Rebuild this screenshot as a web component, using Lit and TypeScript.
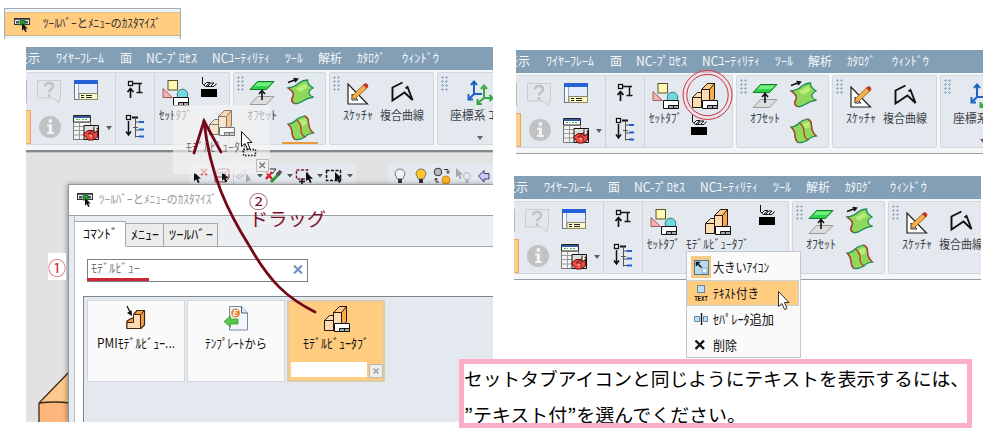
import { LitElement, html, svg, css, nothing } from "lit";
import { customElement, property } from "lit/decorators.js";

/* Text set to an exact width, as the narrow UI face of the application is. */
@customElement("fit-text")
class FitText extends LitElement {
  @property() text = "";
  @property({ type: Number }) w = 50;
  @property({ type: Number }) size = 12;
  static styles = css`
    :host { display: block; flex: none; line-height: 0; }
    svg { display: block; overflow: visible; }
    text { font-family: "Noto Sans CJK JP", "Noto Sans", sans-serif; fill: currentColor; }
  `;
  render() {
    const h = Math.round(this.size * 1.34);
    return html`<svg width=${this.w} height=${h}>
      <text x="0" y=${this.size * 1.04} font-size=${this.size} textLength=${this.w} lengthAdjust="spacingAndGlyphs">${this.text}</text>
    </svg>`;
  }
}

const cursor = (x: number, y: number, s = 1) => svg`
  <path transform="translate(${x} ${y}) scale(${s})" d="M0 0V11L2.6 8.6L4.6 13L6.6 12L4.7 7.9H8.2Z" fill="#111"/>`;

const viewTab = svg`
  <path d="M1 14.5L6.500 9.500H11V24H1Z" fill="#fde3c4"/>
  <path d="M1.500 14.500H11V24.500H1.500ZM1.500 14.500L6.500 9.500H11V14.500" fill="#fddcb4" stroke="#2a1708"/>
  <path d="M10.500 6.500L16.500 .5H23.500V16L18 20Z" fill="#f9ad4a" stroke="#2a1708"/>
  <path d="M10.500 6.500L16.500 .5H23.500L18.500 6.500Z" fill="#fbc887" stroke="#2a1708"/>
  <path d="M10.500 6.500H18.500V24H10.500Z" fill="#fddcb4" stroke="#2a1708"/>
  <path d="M11.500 17.500H26.500V25.500H11.500Z" fill="#fff" stroke="#111"/>
  <path d="M16.500 22.500H26.500V25.500H16.500Z" fill="#aaa" stroke="#111"/><path d="M21.500 22V25" stroke="#111"/>`;

const icons: Record<string, unknown> = {
  help: svg`<path d="M1.5 1.500H24.500V19H23.500L23 24L17.500 19H1.500Z" fill="#e4e7ea" stroke="#c9cdd1"/>
    <path d="M9 7.500Q9.200 4 13 4Q17 4 17 7.200Q17 9.300 14.800 10.500Q13 11.500 13 13.500" fill="none" stroke="#bfc2c5" stroke-width="2.300"/>
    <circle cx="13" cy="16.600" r="1.500" fill="#bfc2c5"/>`,
  info: svg`<circle cx="14" cy="12" r="11" fill="#c0c2c4"/><circle cx="14.300" cy="6" r="2" fill="#f2f2f2"/>
    <path d="M11 9.500H16V17H18V19H11V17H12.800V11.500H11Z" fill="#f2f2f2"/>`,
  window: svg`<rect x="1.500" y="1.500" width="23" height="19" fill="#f5f8ff" stroke="#6c7484"/>
    <rect x="1" y="1" width="24" height="4" fill="#2562d8"/><path d="M5.500 5V20.500" stroke="#a0a8b8"/>
    <path d="M6 5H24V15H6Z" fill="#e4ecfc"/><rect x="6" y="14.500" width="18.500" height="6" fill="#fdf9c4" stroke="#8b8b6a"/>
    <path d="M8 16.500H11M8 18.500H11M13 16.500H19M13 18.500H19" stroke="#222"/>`,
  table: svg`<path d="M.5 .5H17.500V7H.5Z" fill="#fff" stroke="#222"/><path d="M.5 2H17.500" stroke="#345b9c" stroke-width="2"/>
    <path d="M3 4.500H7M9 4.500H14" stroke="#40b050" stroke-dasharray="2 1"/>
    <path d="M.5 7.500H17.500V24.500H.5Z" fill="#f4f4f0" stroke="#777"/><path d="M.5 11.500H17M.5 15.500H17M.5 20H17M6.500 7.500V24" stroke="#999"/>
    <path d="M11 10.500H25.500V24.500H11Z" fill="#ddd" stroke="#111"/>
    <path d="M10.500 19L15 15.500H20L24.500 13V22L20 25H15Z" fill="#ee4a42" stroke="#6b0c0c"/><path d="M15 19H20V25M15 19L20 15.500" stroke="#7c1010" fill="#ff928a"/>
    <path d="M21 11.500V18L25 15" fill="#fff" stroke="#111"/>`,
  insert: svg`<rect x="5.500" y="2.500" width="4" height="4" fill="#fff" stroke="#111" stroke-width="1.300"/>
    <path d="M10 4.500H13M13 4.500H19M16.500 5V13.500M13.500 13.500H19.500" stroke="#111" stroke-width="1.400"/><path d="M7.500 10V19M4.500 13L7.500 9.500L10.500 13" fill="none" stroke="#111" stroke-width="1.700"/>`,
  tree: svg`<rect x="3.500" y=".5" width="4" height="4" fill="#fff" stroke="#111" stroke-width="1.300"/>
    <path d="M5.500 6V19M3 16.500L5.500 20L8 16.500" fill="none" stroke="#111" stroke-width="1.500"/><path d="M9 2.500H15" stroke="#111" stroke-width="2"/>
    <path d="M12.500 2.500V22.500M10 12.500H15M12.500 7H16M12.500 15H16M12.500 21.500H16" stroke="#555" fill="none"/>
    <path d="M16 7H21M16 14.500H21M16 21.500H21" stroke="#1f62d0" stroke-width="2"/>`,
  settab: svg`<rect x="6" y=".5" width="9.500" height="9.500" fill="#fff9b0" stroke="#56532c"/>
    <path d="M1 8.500V17.500H10.500Z" fill="#f7b1b0" stroke="#a05d60"/><circle cx="20.500" cy="14.500" r="5.300" fill="#74d9de" stroke="#28787e"/>
    <path d="M11.500 17.500H26.500V25.500H11.500Z" fill="#fff" stroke="#111"/><path d="M16.500 22.500H26.500V25.500H16.500Z" fill="#aaa" stroke="#111"/><path d="M21.500 22V25" stroke="#111"/>`,
  viewtab: viewTab,
  clapper: svg`<rect x="0" y="12" width="16" height="8" fill="#000"/>
    <path d="M1.500 0V7L4.500 9.500L9 5.500H5.500L3 8M5 9.500H9.500L13 6H9.500L7 9M10 9.500H13L15.500 6.500" fill="none" stroke="#111"/>`,
  offset: svg`<path d="M8.500 1.500H25L17.500 9.500H1Z" fill="#2fd24a" stroke="#167a28"/><path d="M8.500 2.500H23L19 6H6Z" fill="#73ef7e"/>
    <path d="M8.500 16.500H25L17.500 24.500H1Z" fill="#dcdcdc" stroke="#9a9a9a"/><path d="M13 10V20M10 14L13 10.500L16 14" fill="none" stroke="#111" stroke-width="1.600"/>`,
  sheet: svg`<path d="M1 9Q8 8 12 4Q16 1 20.500 1Q20 5 26 9Q21.500 11.500 22 14Q22.500 17 26.500 18Q20 19 15 22.500Q10 25.500 7.500 24.500Q3 22 5.500 18.500Q9 14 1 9Z" fill="#8fd85c" stroke="#1b8b5a" stroke-width="1.300"/>
    <path d="M9 9.500L18 4.500L21 8L13 13Z" fill="#b7ee7b"/><path d="M1 9Q9 14 5.500 18.500Q3 22 7.500 24.500" fill="none" stroke="#c2372a" stroke-width="1.400"/>
    <path d="M1 3.500L9 .5M6.500 -.5L10.500 0L8 3" stroke="#111" stroke-width="1.400" fill="none"/>`,
  strip: svg`<path d="M1 9Q6 8.500 9 5Q12 2 17.500 1Q22 3 21.500 8Q22 15 26.500 18Q21 18.500 18 22Q12 25.500 8 24.500Q5 22 5 17Q4.500 12 1 9Z" fill="#8fd85c" stroke="#1b8b5a" stroke-width="1.200"/>
    <path d="M11 6.500Q15 4 19 4L20 9L15 11Z" fill="#b7ee7b"/>
    <path d="M1 9Q4.500 12 5 17Q5 22 8 24.500M9.500 5Q14 8 14 14Q14 20 18 22M17.500 1Q22 3 21.500 8Q22 15 26.500 18" fill="none" stroke="#b9402a" stroke-width="1.400"/>`,
  sketch: svg`<path d="M1 4V24H20.500Z" fill="#fff" stroke="#222" stroke-width="1.200"/><path d="M5 14V20H11Z" fill="#e5e9ee" stroke="#333"/>
    <path d="M4.500 19.500L6 15L17 4.500L20.500 7.500L9 18Z" fill="#f3b14b" stroke="#8a5a1a" stroke-width=".8"/>
    <path d="M16 5L18.500 3Q21 3.500 21.500 6L19.500 8.500Z" fill="#c3352f"/>`,
  curve: svg`<path d="M11.500 2.500L1.500 7.500V20.500L13.500 12.500L21.500 20L16.500 7L14.500 8.500" fill="none" stroke="#111" stroke-width="1.900"/>`,
  axes: svg`<path d="M7 3V14H15M7 14L2 19" fill="none" stroke="#1f62c4" stroke-width="2"/><path d="M4 5L7 1.500L10 5M1.500 14V19.500H6" fill="none" stroke="#1f62c4" stroke-width="2"/>
    <path d="M17 8V18H25M17 18L11 23" fill="none" stroke="#39a642" stroke-width="2"/><path d="M14 9L17 5.500L20 9M22.500 15L25.500 18L22.500 21M10.500 19V24H15" fill="none" stroke="#39a642" stroke-width="2"/>`,
  custom: svg`<rect x=".5" y=".5" width="15" height="6" fill="#eee" stroke="#333"/><path d="M0 1H16" stroke="#333" stroke-width="1.500"/>
    <rect x="2" y="3" width="3" height="2.500" fill="#555"/><rect x="11" y="3" width="3" height="2.500" fill="#555"/><rect x="6" y="2.500" width="5" height="4.500" fill="#25a035" stroke="#163" stroke-width=".8"/>${cursor(8, 5, 0.7)}`,
  pmi: svg`<path d="M1 15L6 12H8V8L11 4.500H18.500V19L15 22.500H1Z" fill="#f2a24c" stroke="#43230c" stroke-width="1.200"/>
    <path d="M1 16.500H7.500V8.500H14.500V22.500H1Z" fill="#fddcb4" stroke="#43230c"/><path d="M14.500 8.500L18.500 4.500" stroke="#43230c"/>
    <path d="M1 0L5 8" stroke="#111" stroke-width="1.300"/><path d="M1 7L6 10L5.500 4Z" fill="#111"/>`,
  template: svg`<path d="M5.500 .5H17.500L23.500 7V24H5.500Z" fill="#f3f7fc" stroke="#7788a0"/><path d="M17.500 .5V7H23.500" fill="#dce8f8" stroke="#52627c"/>
    <circle cx="11.500" cy="7" r="4.500" fill="#ea843d"/><path d="M14 4.500H10.500L9.500 9.500H13M10 7H13" fill="none" stroke="#fff" stroke-width="1.200"/>
    <path d="M0 15.500L6.500 10V13H14V18H6.500V21Z" fill="#5bc748" stroke="#3b9932" stroke-width=".8"/>`,
};

const tIcon = (n: string, w = 27, h = 26) => html`<svg class="i" width=${w} height=${h} viewBox="0 0 ${w} ${h}" fill="none">${icons[n]}</svg>`;

const MENUS: [string, number, number][] = [
  ["表示", 24, -10], ["ﾜｲﾔｰﾌﾚｰﾑ", 48, 16], ["面", 12, 16], ["NC-ﾌﾟﾛｾｽ", 51, 14], ["NCﾕｰﾃｨﾘﾃｨ", 58, 15],
  ["ﾂｰﾙ", 18, 15], ["解析", 24, 15], ["ｶﾀﾛｸﾞ", 28, 15], ["ｳｨﾝﾄﾞｳ", 37, 17],
];

@customElement("cad-ribbon")
class CadRibbon extends LitElement {
  @property() mode = "drag";
  static styles = css`
    :host { display: block; width: 467px; height: 103px; overflow: hidden; background: #f5f6f8; color: #3c4248; }
    .menu { display: flex; height: 23px; align-items: center; background: #839fb5; color: #f4f8fb; box-sizing: border-box; padding-bottom: 1px; overflow: hidden; }
    .row { display: flex; gap: 3px; padding-top: 2px; }
    .panel { display: flex; flex: none; box-sizing: border-box; height: 73px; border: 1px solid #d3d8dd; background: #e3e9ef; border-radius: 2px; overflow: hidden; }
    .drag .p1 { width: 204px; } .icon .p1 { width: 217px; } .text .p1 { width: 275px; }
    .p1 { border-left: 0; } .p2 { width: 93px; } .p3 { width: 105px; } .p4 { width: 90px; }
    .col { display: grid; grid-template-rows: 36px 30px; padding-top: 6px; flex: none; align-content: start; }
    .i { display: block; flex: none; overflow: visible; }
    .edge { width: 5px; flex: none; display: flex; flex-direction: column; gap: 7px; padding-top: 7px; }
    .bar { width: 1px; height: 23px; background: #b6babe; }
    .sel { width: 5px; height: 34px; box-sizing: border-box; background: #fccf8c; border: 1px solid #e8a564; border-left: 0; }
    .help { width: 42px; padding-left: 5px; box-sizing: border-box; }
    .win { width: 32px; }
    .caret { width: 0; height: 0; border: 3px solid transparent; border-top: 4px solid #5b5f63; border-bottom: 0; flex: none; }
    .win + .caret { margin: 53px 3px 0 1px; }
    .sep { width: 1px; background: #cdd3d9; flex: none; }
    .tree { width: 31px; padding-left: 7px; }
    .big { display: flex; flex-direction: column; align-items: center; padding-top: 7px; gap: 2px; flex: none; }
    .set { width: 40px; }
    .clap { padding-top: 4px; margin-left: 6px; }
    .view { padding: 7px 0 0 6px; }
    .view .i + .i { margin-top: 6px; }
    .text .view2 { width: 64px; margin-left: 2px; } .text .clap { margin-left: 10px; padding-top: 3px; }
    .grip { width: 8px; height: 15px; margin: 3px 0 0 3px; flex: none; background: radial-gradient(circle at 1.500px 1.500px, #9db3c8 1.300px, transparent 1.400px) 0 0 / 4px 4px; }
    .ofs { width: 32px; margin-left: 1px; }
    .sheets { width: 36px; margin-left: 4px; padding-left: 5px; box-sizing: border-box; }
    .drag .sheets { border-bottom: 2px solid #e99a3f; }
    .sk { width: 32px; margin-left: 1px; } .cv { width: 45px; margin-left: 5px; }
    .ax { width: 62px; margin-left: 1px; align-items: flex-start; } .ax .i { margin-left: 17px; } .ax .caret { margin: 10px 0 0 27px; }
  `;
  render() {
    const m = this.mode;
    const clap = tIcon("clapper", 16, 20);
    return html`<div class=${m}>
      <div class="menu">${MENUS.map(([t, w, g]) => html`<fit-text style="margin-left:${g}px" .text=${t} .w=${w} .size=${12.5}></fit-text>`)}</div>
      <div class="row">
        <div class="panel p1">
          <div class="edge"><div class="bar"></div><div class="sel"></div></div>
          <div class="col help">${tIcon("help")}${tIcon("info")}</div>
          <div class="col win">${tIcon("window")}${tIcon("table")}</div><div class="caret"></div>
          <div class="sep"></div>
          <div class="col tree">${tIcon("insert", 24)}${tIcon("tree", 24)}</div>
          <div class="sep"></div>
          <div class="big set">${tIcon("settab")}<fit-text .text=${"ｾｯﾄﾀﾌﾞ"} .w=${33} .size=${12}></fit-text></div>
          ${m === "icon" ? html`<div class="view">${tIcon("viewtab")}${clap}</div>` : nothing}
          ${m === "text" ? html`<div class="big view2">${tIcon("viewtab")}<fit-text .text=${"ﾓﾃﾞﾙﾋﾞｭｰﾀﾌﾞ"} .w=${63} .size=${12}></fit-text></div>` : nothing}
          ${m !== "icon" ? html`<div class="clap">${clap}</div>` : nothing}
        </div>
        <div class="panel p2"><div class="grip"></div>
          <div class="big ofs">${tIcon("offset")}<fit-text .text=${"ｵﾌｾｯﾄ"} .w=${30} .size=${12}></fit-text></div>
          <div class="col sheets">${tIcon("sheet")}${tIcon("strip")}</div>
        </div>
        <div class="panel p3"><div class="grip"></div>
          <div class="big sk">${tIcon("sketch", 22)}<fit-text .text=${"ｽｹｯﾁｬ"} .w=${30} .size=${12}></fit-text></div>
          <div class="big cv">${tIcon("curve", 22)}<fit-text .text=${"複合曲線"} .w=${44} .size=${12}></fit-text></div>
        </div>
        <div class="panel p4"><div class="grip"></div>
          <div class="big ax">${tIcon("axes")}<fit-text .text=${"座標系 ｺﾋﾟｰ"} .w=${62} .size=${12}></fit-text><div class="caret"></div></div>
        </div>
      </div></div>`;
  }
}

const bulb = (x: number, fill: string) => svg`<path d="M${x} 6A5 5 0 1 1 ${x + 10} 6Q${x + 9} 9 ${x + 7.5} 11H${x + 2.5}Q${x + 1} 9 ${x} 6Z" fill=${fill} stroke="#777"/>
  <path d="M${x + 3} 11H${x + 7}V15H${x + 3}Z" fill="#333"/>`;
const caret = (x: number) => svg`<path d="M${x} 6H${x + 6}L${x + 3} 9.500Z" fill="#555"/>`;

@customElement("customize-dialog")
class CustomizeDialog extends LitElement {
  static styles = css`
    :host { display: flex; flex-direction: column; box-sizing: border-box; width: 425px; height: 238px; border-left: 1px solid #8796a2; border-top: 1px solid #969ba0; background: #fff; color: #111; box-shadow: -1px 0 5px #0005; }
    .title { display: flex; align-items: center; gap: 6px; height: 30px; box-sizing: border-box; padding: 0 0 1px 8px; color: #9a9a9a; flex: none; }
    .frame { flex: 1; display: flex; border-top: 1px solid #9ba1a6; background: #e6ebf0; padding-left: 5px; min-height: 0; }
    .page { flex: 1; min-width: 0; display: flex; flex-direction: column; border-left: 1px solid #b3bcc5; background: #fff; }
    .tabs { display: flex; align-items: flex-end; height: 31px; background: #eceff2; flex: none; }
    .tab { display: flex; justify-content: center; align-items: center; box-sizing: border-box; height: 24px; background: #ececec; border: 1px solid #a4a8ac; border-left: 0; padding-bottom: 3px; }
    .on { width: 51px; height: 26px; background: #fff; border-bottom-color: #fff; }
    .t2 { width: 38px; } .t3 { width: 54px; } .rest { flex: 1; border-bottom: 1px solid #a4a8ac; }
    .search { display: flex; justify-content: space-between; align-items: center; box-sizing: border-box; width: 221px; height: 23px; margin: 12px 0 14px 12px; border: 1px solid #7d8186; padding: 0 4px 3px 3px; color: #70757a; flex: none; }
    .list { display: flex; gap: 2px; flex: 1; margin-left: 8px; padding: 3px; border-left: 1px solid #7f868c; border-top: 1px solid #7f868c; background: #e3e9ef; align-items: flex-start; }
    .card { width: 98px; height: 82px; box-sizing: border-box; border: 1px solid #d1d6dc; background: #fafafa; display: flex; flex-direction: column; align-items: center; padding-top: 5px; gap: 2px; flex: none; }
    .pick { background: #ffcc80; border: 2px solid #ddcaa6; padding-top: 4px; }
    .edit { display: flex; gap: 2px; align-items: flex-end; align-self: stretch; margin: 9px 0 0 2px; }
    .field { width: 78px; height: 15px; background: #fff; }
    .x { width: 12px; height: 12px; border: 1px solid #b8b8b8; background: #eee; box-sizing: content-box; margin-bottom: -1px; }
    svg { display: block; flex: none; overflow: visible; }
  `;
  render() {
    return html`
      <div class="title">${tIcon("custom", 16, 13)}<fit-text .text=${"ﾂｰﾙﾊﾞｰとﾒﾆｭｰのｶｽﾀﾏｲｽﾞ"} .w=${118} .size=${12}></fit-text></div>
      <div class="frame"><div class="page">
        <div class="tabs">
          <div class="tab on"><fit-text .text=${"ｺﾏﾝﾄﾞ"} .w=${35} .size=${13}></fit-text></div>
          <div class="tab t2"><fit-text .text=${"ﾒﾆｭｰ"} .w=${28} .size=${13}></fit-text></div>
          <div class="tab t3"><fit-text .text=${"ﾂｰﾙﾊﾞｰ"} .w=${44} .size=${13}></fit-text></div><div class="rest"></div>
        </div>
        <div class="search"><fit-text .text=${"ﾓﾃﾞﾙﾋﾞｭｰ"} .w=${49} .size=${12}></fit-text>
          <svg width="10" height="10"><path d="M1 1.500L9 9.500M9 1.500L1 9.500" stroke="#7193c4" stroke-width="2.200"/></svg></div>
        <div class="list">
          <div class="card">${tIcon("pmi", 20)}<fit-text .text=${"PMIﾓﾃﾞﾙﾋﾞｭｰ..."} .w=${78} .size=${13}></fit-text></div>
          <div class="card">${tIcon("template", 25)}<fit-text .text=${"ﾃﾝﾌﾟﾚｰﾄから"} .w=${62} .size=${13}></fit-text></div>
          <div class="card pick">${tIcon("viewtab")}<fit-text .text=${"ﾓﾃﾞﾙﾋﾞｭｰﾀﾌﾞ"} .w=${66} .size=${13}></fit-text>
            <div class="edit"><div class="field"></div><div class="x"><svg width="12" height="12"><path d="M3.500 3.500L8.500 8.500M8.500 3.500L3.500 8.500" stroke="#999" stroke-width="1.300"/></svg></div></div></div>
        </div>
      </div></div>`;
  }
}

@customElement("app-root")
class AppRoot extends LitElement {
  static styles = css`
    :host { display: block; position: relative; width: 986px; height: 428px; background: #fff; overflow: hidden; font-family: "Noto Sans CJK JP", sans-serif; color: #111; }
    .abs, .shot { position: absolute; }
    svg { display: block; overflow: visible; flex: none; }
    .entry { left: 4px; top: 8px; width: 177px; height: 31px; box-sizing: border-box; border: 1px solid #a4abba; border-bottom: 0; background: #eff2f5; padding-top: 3px; }
    .entry div { display: flex; align-items: center; gap: 13px; height: 24px; background: #ffcc80; padding-left: 9px; box-sizing: border-box; border-top: 1px solid #dfc39a; border-bottom: 1px solid #c9b28e; color: #333; }
    .a { left: 26px; top: 47px; width: 467px; height: 375px; background: #e2e2e2; overflow: hidden; }
    .line { height: 2px; background: #85888a; border-bottom: 1px solid #c2c2c2; }
    .strips { display: flex; gap: 32px; padding: 10px 0 0 163px; }
    .strip { box-sizing: border-box; height: 24px; background: #e3e9ef; padding: 5px 0 0 4px; flex: none; border-radius: 2px; }
    .s1 { width: 167px; } .s2 { width: 110px; padding-left: 7px; }
    .model { left: 13px; top: 323px; }
    customize-dialog { position: absolute; left: 42px; top: 137px; }
    .b { left: 516px; top: 50px; } .c { left: 514px; top: 176px; }
    .thin { height: 1px; background: #9a9c9e; }
    .ghost { left: 173px; top: 105px; width: 97px; height: 69px; background: #f3f3f3a8; color: #777; display: flex; flex-direction: column; align-items: center; padding-top: 5px; gap: 4px; box-sizing: border-box; }
    .ghost svg { opacity: .55; } .ghost fit-text { margin-right: 5px; }
    .over { left: 0; top: 0; pointer-events: none; }
    .one { left: 48px; top: 253px; width: 18px; height: 27px; background: #fff; color: #d0303a; display: flex; align-items: center; }
    .one fit-text { margin-top: 2px; }
    .two { left: 249px; top: 190px; color: #7d0f2c; }
    .drag { left: 249px; top: 207px; color: #7d0f2c; }
    .under { left: 87px; top: 278px; width: 62px; height: 3px; background: #cf2431; }
    .ctx { left: 686px; top: 251px; width: 115px; height: 107px; box-sizing: border-box; border: 1px solid #c4c8cc; background: #fafafa; padding-top: 2px; }
    .it { display: flex; align-items: center; height: 26px; box-sizing: border-box; padding-left: 3px; gap: 2px; border: 1px solid transparent; }
    .it svg { width: 20px; height: 22px; } .it fit-text { margin-top: -2px; }
    .hot { background: #ffcc80; border-color: #c7cfd8; margin-right: 1px; }
    .note { left: 459px; top: 359px; width: 513px; height: 69px; box-sizing: border-box; border: 5px solid #fbaec8; background: #fff; color: #000; display: flex; flex-direction: column; gap: 11px; padding-top: 3px; overflow: hidden; }
  `;
  render() {
    return html`
      <div class="abs entry"><div>${tIcon("custom", 16, 13)}<fit-text .text=${"ﾂｰﾙﾊﾞｰとﾒﾆｭｰのｶｽﾀﾏｲｽﾞ"} .w=${118} .size=${12}></fit-text></div></div>

      <div class="shot a">
        <cad-ribbon mode="drag"></cad-ribbon><div class="line"></div>
        <div class="strips">
          <div class="strip s1"><svg width="160" height="16" fill="none">
            ${cursor(1, 4, 0.85)}<path d="M8 1L14 7M14 1L8 7" stroke="#dd3a3a" stroke-width="1.800"/>
            <path d="M22 5L26 1H36V10L32 14H22ZM22 5H32V14M32 5L36 1M22 9H36" stroke="#a54545"/>${cursor(29, 4, 0.8)}
            <path d="M40.500 -3V16" stroke="#ccd1d6"/><path d="M43 9L52 1L54 4L46 11Z" fill="#ddd" stroke="#bbb"/><path d="M53 5V14L58 12Z" fill="#aaa"/>
            ${caret(64)}<path d="M74 1H83L79 6" stroke="#333"/><path d="M73 4L79 11M79 4L73 11" stroke="#d51f26" stroke-width="2.400"/>
            <path d="M78 14L87 5" stroke="#2a9c35" stroke-width="3"/><path d="M84 7L88 3" stroke="#555" stroke-width="3.500"/>${caret(94)}
            <rect x="103.500" y="2" width="11" height="9" stroke="#8c1a38" stroke-width="1.500" stroke-dasharray="3 1.500"/>${cursor(113, 4, 0.85)}<path d="M106 13.500H112M109 10.500V16" stroke="#111" stroke-width="1.600"/>${caret(124)}
            <rect x="133.500" y="2.500" width="14" height="10" stroke="#111" stroke-width="1.500" stroke-dasharray="3 1.500"/>${cursor(142, 4, 0.85)}${caret(154)}
          </svg></div>
          <div class="strip s2"><svg width="96" height="16" fill="none">
            ${bulb(0, "#f1f1f1")}${bulb(21, "#ffc91f")}
            <circle cx="43" cy="4" r="3.800" fill="#bbb" stroke="#333"/><circle cx="51" cy="12" r="4" fill="#ffb52e" stroke="#d98a12"/>
            <path d="M49 1.500H53V5M51.500 3.500L53 5.500L54.500 3.500M44 14H41V10.500M39.500 12L41 10L42.500 12" stroke="#333"/>
            <g opacity=".3">${cursor(61, 0, 0.85)}<circle cx="72" cy="8" r="3.500" stroke="#444"/><path d="M70.500 11.500H73.500V15H70.500Z" fill="#444"/></g>
            <path d="M83.500 8L89 2.500V5.500H94V11H89V14Z" fill="#cfc8f8" stroke="#3f3a72"/>
          </svg></div>
        </div>
        <svg class="abs model" width="40" height="55"><path d="M0 33L31 1V33Z" fill="#fcc88c"/><path d="M0 33H31V55H0Z" fill="#fdb67c"/><path d="M0 55V33L31 1M0 33Q16 31 31 33" fill="none" stroke="#3a2a1c" stroke-width="1.300"/></svg>
        <customize-dialog></customize-dialog>
      </div>

      <div class="shot b"><cad-ribbon mode="icon"></cad-ribbon><div class="thin"></div></div>
      <div class="shot c"><cad-ribbon mode="text"></cad-ribbon><div class="thin"></div></div>

      <div class="abs ghost">${tIcon("viewtab")}<fit-text .text=${"ﾓﾃﾞﾙﾋﾞｭｰﾀﾌﾞ"} .w=${66} .size=${12}></fit-text></div>
      <div class="abs one"><fit-text .text=${"①"} .w=${18} .size=${18}></fit-text></div>
      <div class="abs two"><fit-text .text=${"②"} .w=${19} .size=${17}></fit-text></div>
      <div class="abs drag"><fit-text .text=${"ドラッグ"} .w=${77} .size=${18.5}></fit-text></div>
      <div class="abs under"></div>

      <div class="abs ctx">
        <div class="it"><svg viewBox="0 0 20 22"><rect width="20" height="22" fill="#f7ca86"/><rect x="3.500" y="4.500" width="14" height="14" fill="#b9daf0" stroke="#55758c"/><rect x="11" y="12" width="5" height="5" fill="#e9f3fa" stroke="#8ba5b7"/><path d="M5.500 10V6.500H9M6 7L10.500 11.500" fill="none" stroke="#111" stroke-width="1.500"/></svg>
          <fit-text .text=${"大きいｱｲｺﾝ"} .w=${56} .size=${13}></fit-text></div>
        <div class="it hot"><svg viewBox="0 0 20 22"><rect x="6.500" y="3.500" width="7" height="7" fill="#bfe0f5" stroke="#5f89a5"/><text x="3.500" y="18.500" font-size="7" font-weight="700" font-family="Liberation Sans, sans-serif" textLength="13" lengthAdjust="spacingAndGlyphs">TEXT</text></svg>
          <fit-text .text=${"ﾃｷｽﾄ付き"} .w=${46} .size=${13}></fit-text></div>
        <div class="it"><svg viewBox="0 0 20 22"><path d="M3.500 8.500H8.500V13.500H3.500ZM12.500 8.500H16.500V13.500H12.500Z" fill="#bfe0f5" stroke="#5f89a5"/><path d="M10.500 5V17" stroke="#111" stroke-width="1.400"/></svg>
          <fit-text .text=${"ｾﾊﾟﾚｰﾀ追加"} .w=${61} .size=${13}></fit-text></div>
        <div class="it"><svg viewBox="0 0 20 22"><path d="M4.500 6.500L13 15M13 6.500L4.500 15" stroke="#111" stroke-width="2.400"/></svg>
          <fit-text .text=${"削除"} .w=${24} .size=${13}></fit-text></div>
      </div>

      <div class="abs note"><fit-text .text=${"セットタブアイコンと同じようにテキストを表示するには、"} .w=${505} .size=${18.5}></fit-text>
        <fit-text .text=${"”テキスト付”を選んでください。"} .w=${282} .size=${18.5}></fit-text></div>

      <svg class="abs over" width="986" height="428" fill="none">
        <g stroke="#740719" stroke-width="2.800" stroke-linecap="round"><path d="M315 312C287 298 270 282 250 247C228 212 210 176 204 121"/><path d="M194 153L204 121L221 152"/></g>
        <circle cx="707.500" cy="95" r="22.700" stroke="#f6dde2" stroke-width="4" opacity=".6"/>
        <circle cx="707.500" cy="95" r="24.500" stroke="#c8323f"/><circle cx="707.500" cy="95" r="20.700" stroke="#c8323f"/>
        <rect x="256.500" y="159.500" width="12" height="12" fill="#f0f0f0" stroke="#bbb"/><path d="M259.500 162.500L265 168M265 162.500L259.500 168" stroke="#777" stroke-width="1.300"/>
        <path transform="translate(241.500 131.500)" d="M0 0V15L3.500 12L6 18L8.500 17L6 11H10.500Z" fill="#fff" stroke="#111"/>
        <rect x="243.500" y="149.500" width="12" height="6" stroke="#111" stroke-width="1.400" stroke-dasharray="1.500 1.500"/>
        <path transform="translate(778.500 291.500)" d="M0 0V15L3.500 12L6 18L8.500 17L6 11H10.500Z" fill="#fff" stroke="#333"/>
      </svg>`;
  }
}
